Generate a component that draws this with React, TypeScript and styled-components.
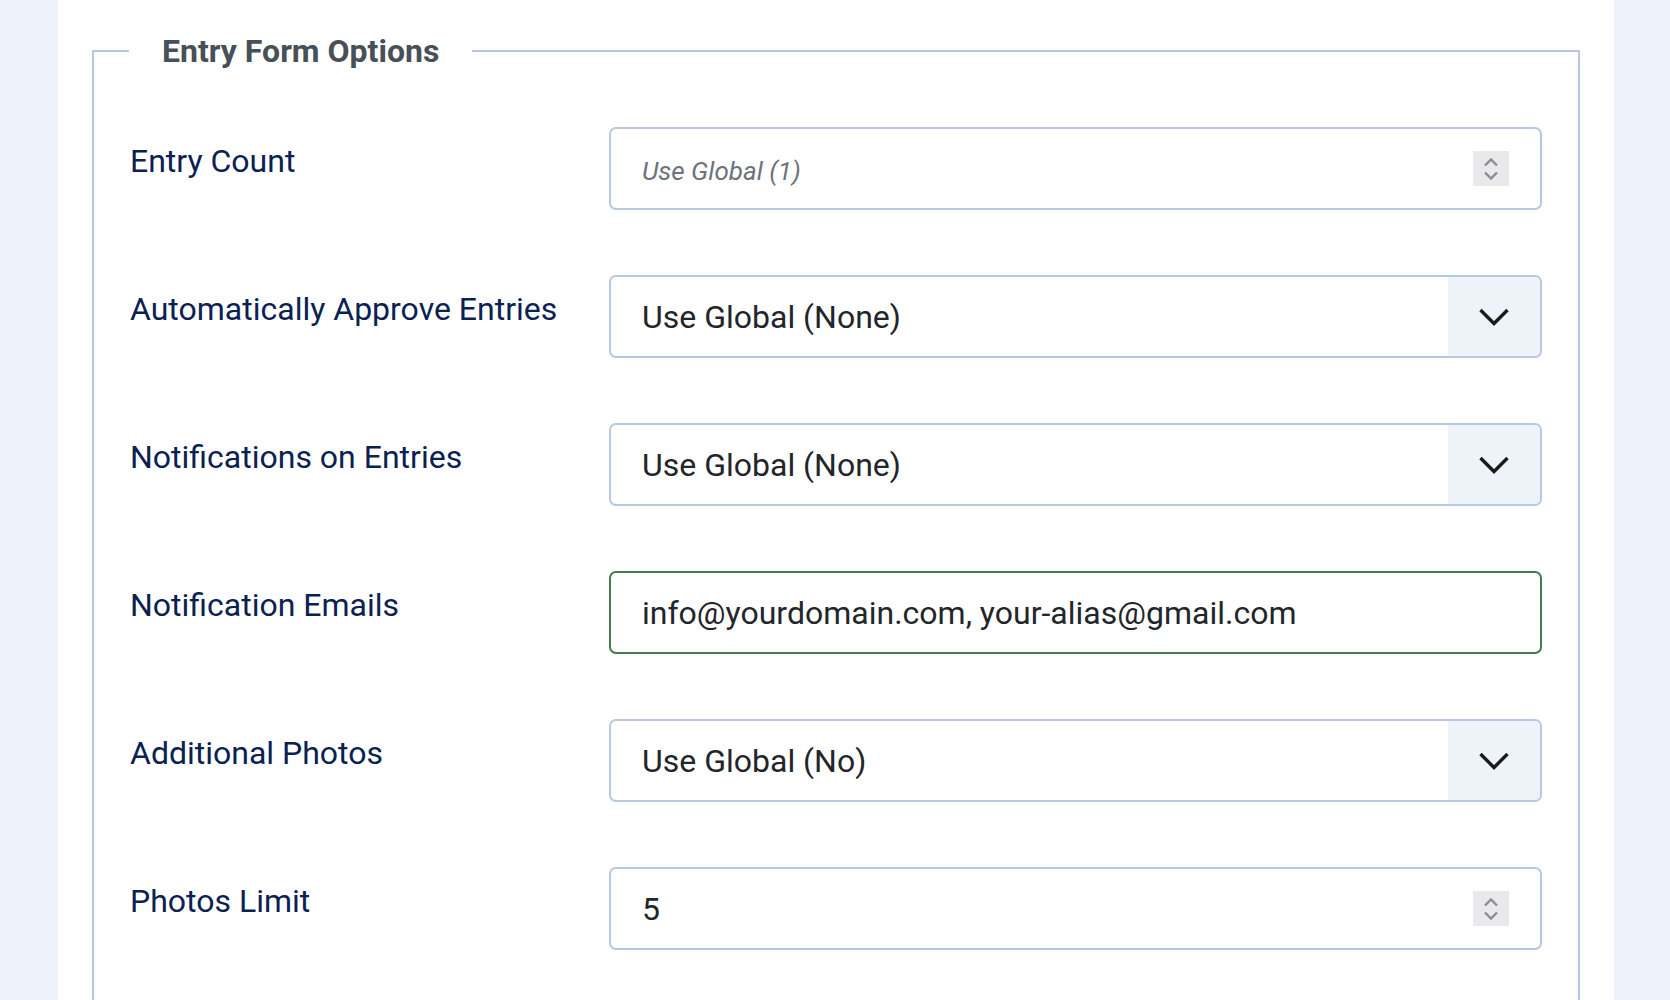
import React from "react";
import styled, { createGlobalStyle } from "styled-components";

const Global = createGlobalStyle`
  html, body { margin: 0; padding: 0; }
  body {
    background: #eef3fb;
    font-family: Roboto, "Liberation Sans", Arial, sans-serif;
  }
  * { box-sizing: border-box; }
`;

const Page = styled.div`
  display: flex;
  min-height: 1000px;
  padding: 0 56px 0 58px;
`;

const Panel = styled.main`
  flex: 1;
  background: #ffffff;
  padding: 32px 34px 0 34px;
  overflow: hidden;
`;

const Fieldset = styled.fieldset`
  margin: 0;
  min-height: 1000px;
  border: 2px solid #b8c8e0;
  border-bottom: none;
  padding: 57px 36px 0 35px;
`;

const Legend = styled.legend`
  padding: 0 33px;
  margin: 0;
  font-family: Roboto, "Liberation Sans", Arial, sans-serif;
  font-weight: 700;
  font-size: 32px;
  line-height: 38px;
  color: #474f57;
`;

const Grid = styled.div`
  display: grid;
  grid-template-columns: 480px 1fr;
  row-gap: 65px;
`;

const Label = styled.label`
  padding-top: 10px;
  padding-left: 1px;
  font-size: 32px;
  line-height: 1.5;
  color: #0a2152;
`;

const Box = styled.div<{ $focus?: boolean }>`
  display: flex;
  align-items: center;
  height: 83px;
  border: 2px solid ${(p) => (p.$focus ? "#457b4f" : "#b8c8e0")};
  border-radius: 7px;
  overflow: hidden;
  background: #fff;
`;

const TextInput = styled.input`
  flex: 1;
  min-width: 0;
  height: 100%;
  border: none;
  outline: none;
  background: transparent;
  padding: 0 31px;
  font-family: Roboto, "Liberation Sans", Arial, sans-serif;
  font-size: 32px;
  color: #22262a;
  &::placeholder {
    font-style: italic;
    font-size: 26px;
    color: #6c737b;
  }
`;

const Select = styled.select`
  flex: 1;
  min-width: 0;
  height: 100%;
  border: none;
  outline: none;
  appearance: none;
  background: transparent;
  padding: 0 31px;
  font-family: Roboto, "Liberation Sans", Arial, sans-serif;
  font-size: 32px;
  color: #22262a;
`;

const ArrowBox = styled.div`
  width: 92px;
  height: 100%;
  background: #eef3fa;
  display: flex;
  align-items: center;
  justify-content: center;
`;

const Spinner = styled.div`
  width: 36px;
  height: 35px;
  margin-right: 31px;
  background: #e9e9ec;
  display: flex;
  align-items: center;
  justify-content: center;
`;

const Chevron = () => (
  <svg width="32" height="20" viewBox="0 0 32 20">
    <polyline points="2.5,3 16,16.5 29.5,3" fill="none" stroke="#1b1b1b" strokeWidth="3.4" />
  </svg>
);

const SpinIcon = () => (
  <svg width="18" height="26" viewBox="0 0 18 26">
    <polyline points="3,9.5 9,3.5 15,9.5" fill="none" stroke="#8e8b96" strokeWidth="2.4" />
    <polyline points="3,16.5 9,22.5 15,16.5" fill="none" stroke="#8e8b96" strokeWidth="2.4" />
  </svg>
);

const SelectField = ({ id, value }: { id: string; value: string }) => (
  <Box>
    <Select id={id} defaultValue={value}>
      <option value={value}>{value}</option>
    </Select>
    <ArrowBox>
      <Chevron />
    </ArrowBox>
  </Box>
);

const NumberField = ({ id, value, placeholder }: { id: string; value?: string; placeholder?: string }) => (
  <Box>
    <TextInput id={id} defaultValue={value} placeholder={placeholder} inputMode="numeric" />
    <Spinner>
      <SpinIcon />
    </Spinner>
  </Box>
);

export default function App() {
  return (
    <>
      <Global />
      <Page>
        <Panel>
          <Fieldset>
            <Legend>Entry Form Options</Legend>
            <Grid>
              <Label htmlFor="count">Entry Count</Label>
              <NumberField id="count" placeholder="Use Global (1)" />

              <Label htmlFor="approve">Automatically Approve Entries</Label>
              <SelectField id="approve" value="Use Global (None)" />

              <Label htmlFor="notify">Notifications on Entries</Label>
              <SelectField id="notify" value="Use Global (None)" />

              <Label htmlFor="emails">Notification Emails</Label>
              <Box $focus>
                <TextInput id="emails" defaultValue="info@yourdomain.com, your-alias@gmail.com" />
              </Box>

              <Label htmlFor="photos">Additional Photos</Label>
              <SelectField id="photos" value="Use Global (No)" />

              <Label htmlFor="limit">Photos Limit</Label>
              <NumberField id="limit" value="5" />
            </Grid>
          </Fieldset>
        </Panel>
      </Page>
    </>
  );
}
